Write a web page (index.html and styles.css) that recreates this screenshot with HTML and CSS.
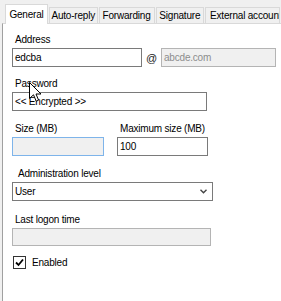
FILE: index.html
```html
<!DOCTYPE html>
<html lang="en">
<head>
    <meta charset="UTF-8">
    <meta name="viewport" content="width=device-width, initial-scale=1.0">
    <title>Account - General</title>
    <link rel="stylesheet" href="styles.css">
</head>
<body>
    <div class="tabs">
        <div class="tab tab-general active">General</div>
        <div class="tab tab-auto">Auto-reply</div>
        <div class="tab tab-fwd">Forwarding</div>
        <div class="tab tab-sig">Signature</div>
        <div class="tab tab-ext">External accounts</div>
    </div>

    <div class="panel">
        <div class="label first">Address</div>
        <div class="row">
            <div class="box box-address">edcba</div>
            <span class="at">@</span>
            <div class="box box-domain readonly">abcde.com</div>
        </div>

        <div class="label">Password</div>
        <div class="box box-password">&lt;&lt; Encrypted &gt;&gt;</div>

        <div class="pair">
            <div class="col">
                <div class="label">Size (MB)</div>
                <div class="box box-size readonly focus"></div>
            </div>
            <div class="col">
                <div class="label">Maximum size (MB)</div>
                <div class="box box-max">100</div>
            </div>
        </div>

        <div class="label label-admin">Administration level</div>
        <div class="box box-select">
            <span>User</span>
            <svg class="chevron" width="7" height="5" viewBox="0 0 7 5">
                <path d="M0.5 0.8 L3.5 3.8 L6.5 0.8" fill="none" stroke="#444" stroke-width="1.4"/>
            </svg>
        </div>

        <div class="label label-logon">Last logon time</div>
        <div class="box box-logon readonly"></div>

        <div class="check-row">
            <span class="checkbox">
                <svg width="11" height="11" viewBox="0 0 11 11">
                    <path d="M2 5.5 L4.5 8 L9 2.5" fill="none" stroke="#000" stroke-width="1.8"/>
                </svg>
            </span>
            <span>Enabled</span>
        </div>
    </div>

    <svg class="cursor" width="13" height="21" viewBox="0 0 13 21">
        <path d="M0.5 0.5 L0.5 16.5 L4.5 12.8 L7.2 19.2 L9.6 18.2 L7 12 L12 12 Z" fill="#fff" stroke="#000" stroke-width="1"/>
    </svg>
</body>
</html>
```
FILE: styles.css
```css
body {
    margin: 0;
    background-color: #f0f0f0;
    font-family: "Liberation Sans", Arial, sans-serif;
    font-size: 10px;
    letter-spacing: -0.2px;
    color: #000;
    width: 281px;
    height: 301px;
    overflow: hidden;
    position: relative;
}
.tabs {
    display: flex;
    align-items: flex-end;
    height: 23px;
    padding-left: 5px;
    position: relative;
    z-index: 1;
}
.tab {
    box-sizing: border-box;
    height: 16px;
    border: 1px solid #d9d9d9;
    border-bottom: none;
    margin-right: 1px;
    display: flex;
    align-items: center;
    justify-content: center;
    white-space: nowrap;
    overflow: hidden;
    background-color: #f0f0f0;
}
.tab.active {
    height: 20px;
    margin-bottom: -1px;
    background-color: #fff;
    border-color: #d9d9d9;
}
.tab-general { width: 46px; }
.tab-auto { width: 52px; }
.tab-fwd { width: 60px; }
.tab-sig { width: 52px; }
.tab-ext {
    width: 80px;
    justify-content: flex-start;
    padding-left: 4px;
}
.panel {
    box-sizing: border-box;
    height: 278px;
    margin-left: 2px;
    border-top: 1px solid #d9d9d9;
    border-left: 1px solid #a0a0a0;
    background-color: #fff;
    padding-left: 9px;
}
.label {
    line-height: 13px;
    height: 13px;
    padding-left: 3px;
    margin-top: 10px;
    margin-bottom: 2px;
    white-space: nowrap;
}
.label.first {
    margin-top: 9px;
}
.row {
    display: flex;
    align-items: center;
}
.box {
    box-sizing: border-box;
    height: 19px;
    border: 1px solid #7a7a7a;
    background-color: #fff;
    padding-left: 2px;
    line-height: 17px;
    white-space: nowrap;
}
.box.readonly {
    background-color: #f0f0f0;
    border-color: #b4b4b4;
    color: #8d8d8d;
}
.box.focus {
    border-color: #7eb4ea;
}
.at {
    width: 19px;
    text-align: center;
    font-size: 11px;
    color: #222;
}
.box-address { width: 130px; }
.box-domain { width: 115px; }
.box-password { width: 195px; }
.pair {
    display: flex;
    gap: 13px;
    margin-top: 11px;
}
.pair .label {
    margin-top: 0;
}
.box-size { width: 92px; }
.box-max { width: 91px; }
.label-admin {
    padding-left: 6px;
    margin-top: 11px;
}
.box-select {
    width: 201px;
    display: flex;
    align-items: center;
    justify-content: space-between;
    padding-right: 5px;
}
.label-logon {
    margin-top: 12px;
}
.box-logon {
    width: 199px;
    height: 18px;
    border-color: #a0a0a0;
}
.check-row {
    display: flex;
    align-items: center;
    gap: 6px;
    margin-top: 10px;
    margin-left: 1px;
}
.checkbox {
    box-sizing: border-box;
    width: 13px;
    height: 13px;
    border: 1px solid #333;
    background-color: #fff;
    display: flex;
    align-items: center;
    justify-content: center;
}
.cursor {
    position: absolute;
    left: 29px;
    top: 82px;
}
```
